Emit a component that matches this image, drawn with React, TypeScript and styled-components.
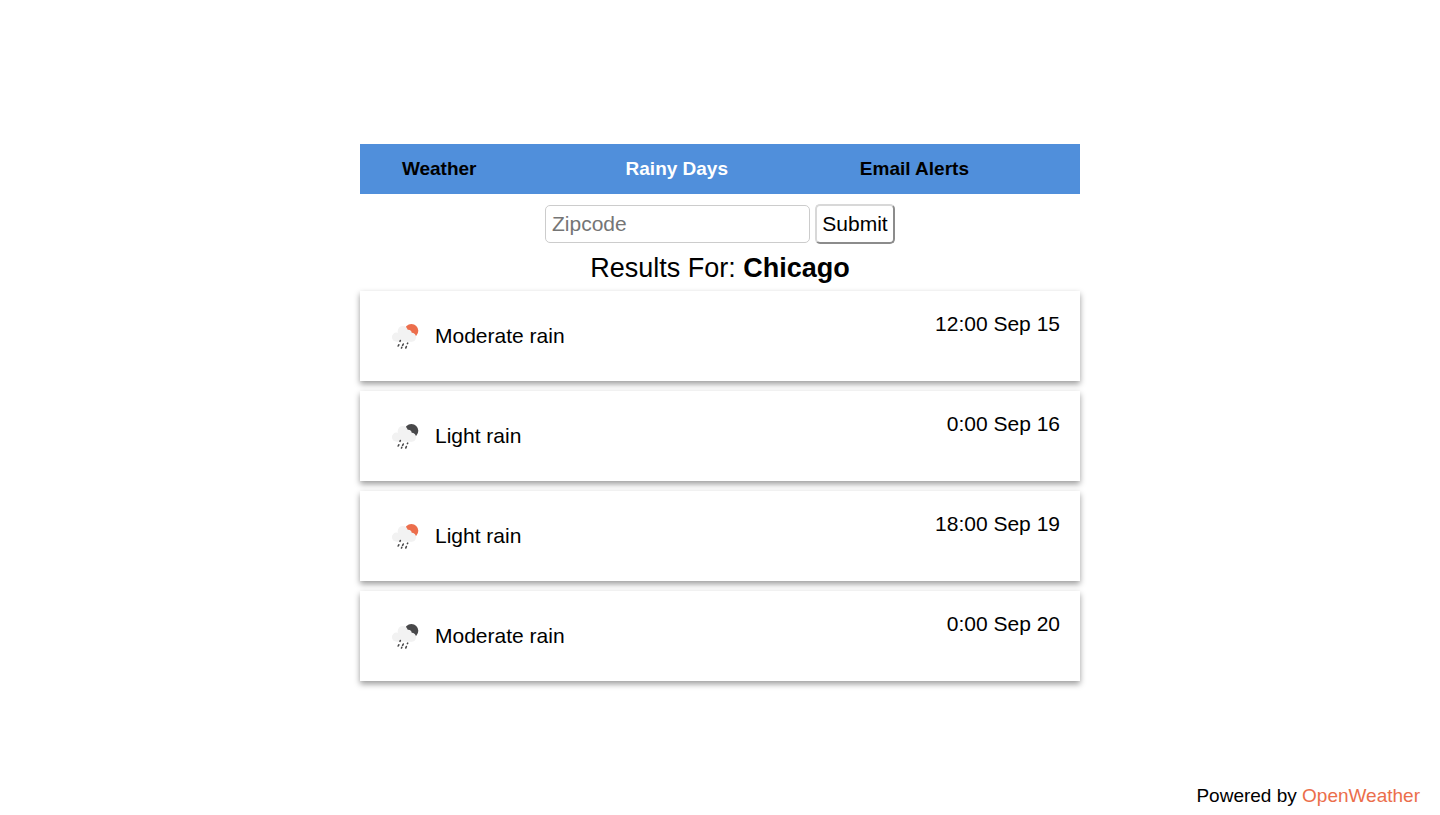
import React from "react";
import styled, { createGlobalStyle } from "styled-components";

const GlobalStyle = createGlobalStyle`
  *, *::before, *::after { box-sizing: border-box; }
  body {
    margin: 0;
    background: #fff;
    color: #000;
    font-family: "Liberation Sans", Arial, sans-serif;
    font-size: 21px;
    line-height: 26px;
  }
`;

const Page = styled.div`
  min-height: 100vh;
  display: flex;
  flex-direction: column;
`;

const Main = styled.main`
  width: 50%;
  min-width: 400px;
  margin: 144px auto 0;
  flex: 1;
`;

const NavBar = styled.nav`
  background: #508fdb;
`;

const NavList = styled.ul`
  display: flex;
  margin: 0;
  padding: 0;
  list-style: none;
`;

const NavItem = styled.li`
  width: 33%;
  padding-right: 11%;
  text-align: center;
  white-space: nowrap;
`;

const NavLink = styled.a<{ $active?: boolean }>`
  display: block;
  padding: 13px 0;
  color: ${(p) => (p.$active ? "#fff" : "#000")};
  font-size: 19px;
  line-height: 24px;
  font-weight: bold;
  text-decoration: none;
`;

const SearchForm = styled.form`
  display: flex;
  justify-content: center;
  align-items: center;
  gap: 5px;
  padding-top: 10px;
`;

const ZipInput = styled.input`
  width: 265px;
  height: 38px;
  padding: 0 6px;
  border: 1px solid #ccc;
  border-radius: 5px;
  background: #fff;
  font: inherit;
  &::placeholder { color: #757575; }
`;

const SubmitButton = styled.button`
  width: 80px;
  height: 40px;
  padding: 0;
  border: 2px solid;
  border-color: #d8d8d8 #8c8c8c #8c8c8c #d8d8d8;
  border-radius: 5px;
  background: #fff;
  color: #000;
  font: inherit;
`;

const Results = styled.p`
  margin: 8px 0 6px;
  text-align: center;
  font-size: 27px;
  line-height: 33px;
`;

const CardList = styled.ul`
  display: flex;
  flex-direction: column;
  gap: 10px;
  margin: 0;
  padding: 0;
  list-style: none;
`;

const Card = styled.li`
  display: flex;
  justify-content: space-between;
  padding: 20px;
  background: #fff;
  box-shadow: 0 3px 6px rgba(0, 0, 0, 0.4);
`;

const Condition = styled.div`
  display: flex;
  align-items: center;
  gap: 5px;
`;

const IconSvg = styled.svg`
  display: block;
  width: 50px;
  height: 50px;
`;

const Footer = styled.footer`
  padding: 0 20px 8px;
  text-align: right;
  font-size: 19px;
  line-height: 22px;
`;

const FooterLink = styled.a`
  color: #eb6e4b;
  text-decoration: none;
`;

function RainIcon({ night }: { night: boolean }) {
  return (
    <IconSvg viewBox="0 0 50 50" aria-hidden="true">
      <circle cx="31.4" cy="19.8" r="6.9" fill={night ? "#48484a" : "#ec6e4c"} />
      <g fill="#f2f2f2">
        <circle cx="16.4" cy="26.1" r="4.5" />
        <circle cx="22.8" cy="20.2" r="5.1" />
        <circle cx="28" cy="22.6" r="3.8" />
        <circle cx="31.6" cy="26.2" r="4.5" />
        <rect x="16.4" y="22" width="15.2" height="8.7" />
      </g>
      <g fill="none" stroke="#48484a" strokeWidth="1.6" strokeLinecap="round">
        <path d="M20.3 29.6l-.3.7" />
        <path d="M18.8 33.8l-.6 1.2" />
        <path d="M23.3 33l-.7 1.4" />
        <path d="M21.8 36.3l-.3.7" />
        <path d="M27.7 32.1l-.3.5" />
        <path d="M26.4 35.5l-.6 1.4" />
      </g>
    </IconSvg>
  );
}

const forecasts = [
  { text: "Moderate rain", time: "12:00 Sep 15", night: false },
  { text: "Light rain", time: "0:00 Sep 16", night: true },
  { text: "Light rain", time: "18:00 Sep 19", night: false },
  { text: "Moderate rain", time: "0:00 Sep 20", night: true },
];

export default function App() {
  return (
    <Page>
      <GlobalStyle />
      <Main>
        <NavBar>
          <NavList>
            <NavItem><NavLink href="#weather">Weather</NavLink></NavItem>
            <NavItem><NavLink href="#rainy-days" $active aria-current="page">Rainy Days</NavLink></NavItem>
            <NavItem><NavLink href="#email-alerts">Email Alerts</NavLink></NavItem>
          </NavList>
        </NavBar>
        <SearchForm onSubmit={(e) => e.preventDefault()}>
          <ZipInput type="text" name="zipcode" placeholder="Zipcode" aria-label="Zipcode" />
          <SubmitButton type="submit">Submit</SubmitButton>
        </SearchForm>
        <Results>Results For: <strong>Chicago</strong></Results>
        <CardList>
          {forecasts.map((f) => (
            <Card key={f.time}>
              <Condition>
                <RainIcon night={f.night} />
                <span>{f.text}</span>
              </Condition>
              <time>{f.time}</time>
            </Card>
          ))}
        </CardList>
      </Main>
      <Footer>
        Powered by <FooterLink href="#openweather">OpenWeather</FooterLink>
      </Footer>
    </Page>
  );
}
